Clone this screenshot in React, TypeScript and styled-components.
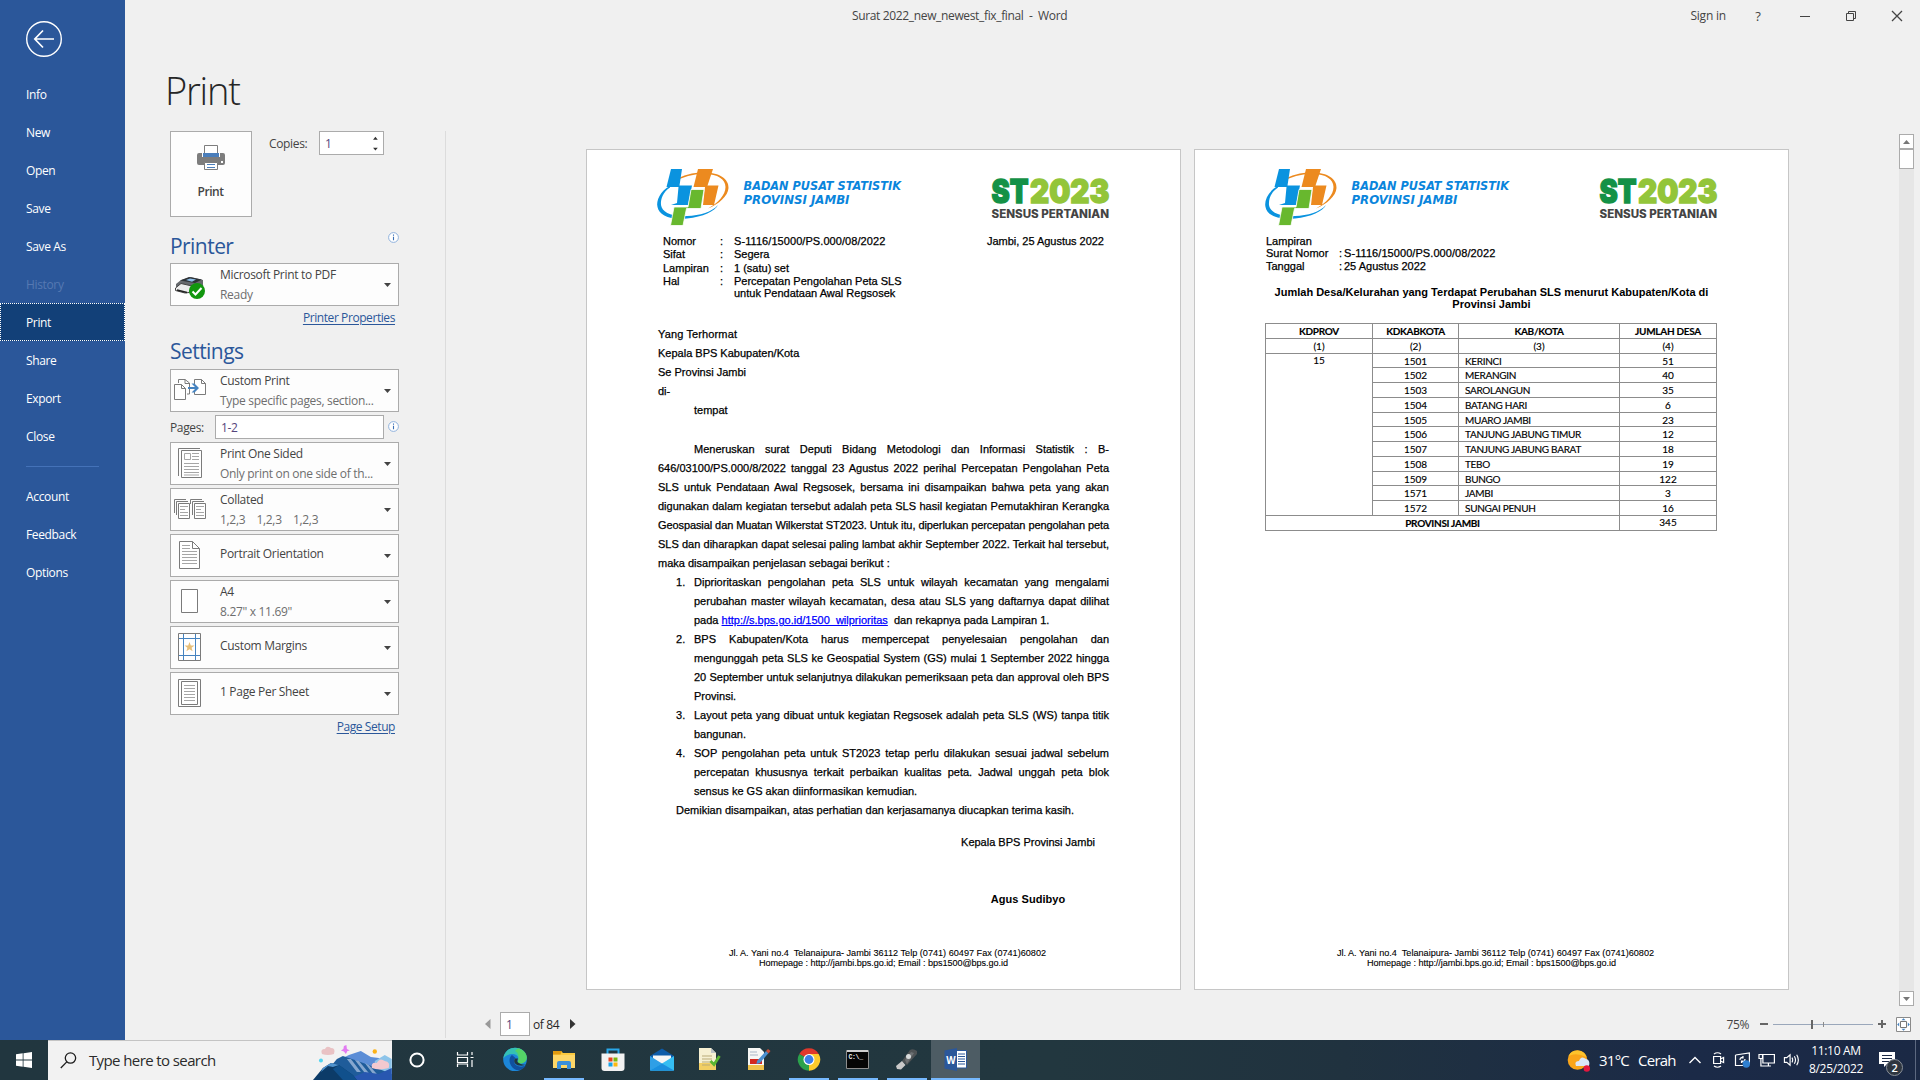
import React from "react";
import styled, { createGlobalStyle } from "styled-components";

const ui = `"Open Sans", "Noto Sans", sans-serif`;
const doc = `"Liberation Sans", Arial, sans-serif`;

const GlobalStyle = createGlobalStyle`
  * { box-sizing: border-box; }
  body { margin: 0; background: #f0f0f0; font-family: ${ui}; font-size: 12px; letter-spacing: -0.35px; color: #444; overflow: hidden; }
`;

const Screen = styled.div`
  width: 1920px;
  height: 1080px;
  display: flex;
  flex-direction: column;
`;

const Window = styled.div`
  height: 1040px;
  display: flex;
`;

/* ---------- backstage navigation ---------- */

const Sidebar = styled.nav`
  width: 125px;
  background: #2b579a;
  color: #fff;
  display: flex;
  flex-direction: column;
`;

const BackButton = styled.div`
  height: 75px;
  padding: 20px 0 0 25px;
`;

const NavItem = styled.div<{ $active?: boolean; $disabled?: boolean }>`
  height: 38px;
  line-height: 38px;
  padding-left: ${(p) => (p.$active ? 25 : 26)}px;
  color: ${(p) => (p.$disabled ? "#5679b2" : "#fff")};
  ${(p) => (p.$active ? "background: #124078; border: 1px dotted #fff;" : "padding-top: 1px;")}
`;

const NavRule = styled.div`
  height: 1px;
  width: 73px;
  margin: 11px 0 10px 26px;
  background: #4472b8;
`;

/* ---------- window chrome ---------- */

const Main = styled.main`
  flex: 1;
  display: flex;
  flex-direction: column;
`;

const TitleBar = styled.header`
  height: 32px;
  display: grid;
  grid-template-columns: 1fr 217px 1fr;
  align-items: start;
`;

const WindowTitle = styled.div`
  grid-column: 2;
  white-space: pre;
  margin-left: -62px;
  width: 230px;
  line-height: 31px;
`;

const Controls = styled.div`
  display: flex;
  justify-content: flex-end;
  align-items: center;
  height: 31px;
  padding-right: 17px;
`;

const SignIn = styled.span`
  letter-spacing: -0.2px;
  margin-right: 27px;
`;

const Help = styled.span`
  font-size: 13px;
  width: 10px;
  text-align: center;
  margin-right: 36px;
`;

const ControlIcon = styled.svg`
  width: 12px;
  height: 12px;
  & + & { margin-left: 34px; }
`;

const Heading = styled.h1`
  margin: 0;
  height: 99px;
  padding: 32px 0 0 40px;
  font-weight: 300;
  font-size: 38px;
  line-height: 52px;
  letter-spacing: -1.2px;
  color: #262626;
`;

const Body = styled.div`
  flex: 1;
  display: flex;
`;

/* ---------- print settings ---------- */

const Settings = styled.section`
  width: 321px;
  height: 907px;
  padding-left: 45px;
  border-right: 1px solid #dcdcdc;
  display: flex;
  flex-direction: column;
`;

const PrintRow = styled.div`
  display: flex;
  height: 86px;
`;

const PrintButton = styled.button`
  width: 82px;
  height: 86px;
  border: 1px solid #ababab;
  background: #fdfdfd;
  padding: 13px 1px 0 0;
  display: flex;
  flex-direction: column;
  align-items: center;
  gap: 12px;
  font: 600 12px ${ui};
  letter-spacing: -0.5px;
  color: #444;
`;

const CopiesLabel = styled.label`
  width: 67px;
  padding-left: 17px;
  line-height: 25px;
`;

const Field = styled.div<{ $w: number }>`
  width: ${(p) => p.$w}px;
  height: 24px;
  border: 1px solid #ababab;
  background: #fff;
  line-height: 23px;
  padding-left: 5px;
  display: flex;
  justify-content: space-between;
  color: #56457c;
`;

const GroupHead = styled.div<{ $top: number; $h: number }>`
  margin-top: ${(p) => p.$top}px;
  height: ${(p) => p.$h}px;
  width: 229px;
  display: flex;
  justify-content: space-between;
  & > svg { margin-top: 1px; }
`;

const GroupTitle = styled.h2`
  margin: 0;
  font-weight: 400;
  font-size: 21px;
  line-height: 30px;
  letter-spacing: -0.55px;
  color: #2b579a;
`;

const Drop = styled.div`
  width: 229px;
  height: 43px;
  flex: none;
  border: 1px solid #ababab;
  background: #fdfdfd;
  display: flex;
  align-items: center;
  padding-right: 7px;
  margin-bottom: 3px;
`;

const DropIcon = styled.div`
  width: 49px;
  padding-left: 2px;
  height: 36px;
`;

const DropText = styled.div<{ $single: boolean }>`
  flex: 1;
  line-height: 20px;
  white-space: pre;
  letter-spacing: -0.31px;
  padding-bottom: ${(p) => (p.$single ? 3 : 0)}px;
`;

const Sub = styled.div`
  color: #6e6e6e;
`;

const PagesRow = styled.div`
  display: flex;
  align-items: center;
  height: 24px;
  margin-bottom: 3px;
`;

const PagesLabel = styled.span`
  width: 45px;
`;

const InfoSlot = styled.span`
  margin-left: 4px;
  height: 12px;
  line-height: 0;
`;

const Link = styled.a`
  width: 225px;
  height: 18px;
  line-height: 18px;
  text-align: right;
  text-decoration: underline;
  text-underline-offset: 2px;
  letter-spacing: -0.42px;
  color: #2b579a;
`;

/* ---------- preview ---------- */

const Preview = styled.section`
  flex: 1;
  display: flex;
  flex-direction: column;
`;

const Canvas = styled.div`
  height: 875px;
  display: flex;
  padding-left: 140px;
`;

const Sheet = styled.article`
  width: 595px;
  height: 841px;
  margin: 18px 13px 0 0;
  border: 1px solid #c6c6c6;
  background: #fff;
  padding: 19px 71px 0 70px;
  font-family: ${doc};
  font-size: 11px;
  letter-spacing: 0;
  color: #000;
  -webkit-text-stroke: 0.25px #000;
`;

const Letterhead = styled.div`
  display: flex;
  height: 57px;
  margin-bottom: 8px;
  -webkit-text-stroke: 0;
`;

const Meta = styled.div`
  display: grid;
  grid-template-columns: 57px 14px 253px 1fr;
  grid-template-rows: 14px 12px 15px 12px 11px;
  padding-left: 6px;
  align-items: center;
  white-space: nowrap;
  height: 91px;
  align-content: start;
`;

const MetaCell = styled.span<{ $col: number; $wide?: boolean }>`
  grid-column: ${(p) => p.$col};
  letter-spacing: ${(p) => (p.$wide ? 0.07 : 0)}px;
`;

const DateCell = styled.span`
  grid-column: 4;
  grid-row: 1;
  letter-spacing: -0.02px;
`;

const Line = styled.p<{ $indent?: number; $justify?: boolean; $wide?: boolean }>`
  margin: 0;
  height: 19px;
  line-height: 19px;
  padding-left: ${(p) => 1 + (p.$indent ?? 0)}px;
  white-space: ${(p) => (p.$justify ? "normal" : "pre")};
  text-align-last: ${(p) => (p.$justify ? "justify" : "left")};
  letter-spacing: ${(p) => (p.$wide ? 0.13 : 0)}px;
`;

const BodyText = styled.div`
  padding-top: 1px;
`;

const Tight = styled.span`
  letter-spacing: -0.1px;
  word-spacing: -0.5px;
`;

const Item = styled.div`
  display: grid;
  grid-template-columns: 18px 1fr;
  padding-left: 18px;
`;

const ItemNo = styled.span`
  line-height: 19px;
  padding-left: 1px;
`;

const DocLink = styled.a`
  color: #0000ff;
  text-decoration: underline;
  -webkit-text-stroke: 0.25px #0000ff;
`;

const Signature = styled.div`
  width: 136px;
  margin: 16px 0 0 303px;
  height: 95px;
  text-align: center;
  white-space: nowrap;
`;

const SignName = styled.div`
  margin-top: 45px;
  font-weight: 700;
  letter-spacing: 0.03px;
  -webkit-text-stroke: 0;
`;

const Foot = styled.footer<{ $top: number }>`
  margin-top: ${(p) => p.$top}px;
  text-align: center;
  font-size: 9.15px;
  line-height: 10px;
  white-space: pre;
  -webkit-text-stroke: 0.1px #000;
`;

const Address = styled.div`
  padding-left: 9px;
`;

const Contact = styled.div`
  padding-left: 1px;
  letter-spacing: -0.07px;
`;

const Attach = styled.div`
  display: grid;
  grid-template-columns: 73px 5px 1fr;
  grid-template-rows: 13px 12px 13px;
  padding-left: 1px;
  align-items: center;
  height: 52px;
  align-content: start;
`;

const TableTitle = styled.div`
  text-align: center;
  font-weight: 700;
  font-size: 11px;
  line-height: 12px;
  height: 37px;
  padding-left: 1px;
  white-space: nowrap;
  -webkit-text-stroke: 0;
`;

const Table = styled.table`
  border-collapse: collapse;
  table-layout: fixed;
  width: 452px;
  font: 10px Lato, Carlito, sans-serif;
  -webkit-text-stroke: 0.15px #000;
`;

const Row = styled.tr<{ $h: number }>`
  height: ${(p) => p.$h}px;
`;

const Cell = styled.td<{ $left?: boolean; $bold?: boolean; $top?: boolean }>`
  border: 1px solid #8c8c8c;
  padding: ${(p) => (p.$left ? "0 0 0 6px" : "0")};
  line-height: 12px;
  text-align: ${(p) => (p.$left ? "left" : "center")};
  vertical-align: ${(p) => (p.$top ? "top" : "middle")};
  font-weight: ${(p) => (p.$bold ? 700 : 400)};
  letter-spacing: ${(p) => (p.$left ? -0.3 : p.$bold ? -0.3 : 0)}px;
`;

const Scroll = styled.div`
  width: 15px;
  height: 872px;
  margin: 3px 0 0 97px;
  background: #e6e6e6;
  display: flex;
  flex-direction: column;
`;

const ScrollPart = styled.div<{ $h: number }>`
  height: ${(p) => p.$h}px;
  border: 1px solid #ababab;
  background: #fff;
  display: flex;
  align-items: center;
  justify-content: center;
  &:last-child { margin-top: auto; }
`;

const Status = styled.div`
  height: 34px;
  display: flex;
  align-items: center;
  padding: 2px 9px 0 39px;
`;

const PageCount = styled.span`
  margin: 0 11px 0 3px;
  color: #262626;
`;

const Percent = styled.span`
  margin-left: auto;
  margin-right: 11px;
`;

const PageField = styled(Field)`
  margin-left: 9px;
`;

const FitSlot = styled.span`
  margin-left: 9px;
  height: 15px;
  line-height: 0;
`;

/* ---------- taskbar ---------- */

const Taskbar = styled.footer`
  height: 40px;
  display: flex;
  background: linear-gradient(90deg, #21363f 0%, #22373f 55%, #20323f 70%, #1b2a47 88%, #1b2945 100%);
  color: #fff;
`;

const Start = styled.div`
  width: 48px;
  padding: 12px 0 0 16px;
`;

const Search = styled.div`
  width: 344px;
  background: #f2f2f2;
  border-top: 1px solid #c4c4c4;
  display: flex;
  align-items: center;
  color: #2b2b2b;
  font-size: 15px;
  letter-spacing: -0.6px;
  padding-left: 12px;
`;

const SearchText = styled.span`
  padding: 0 0 2px 12px;
  width: 237px;
`;

const TaskButton = styled.div<{ $open?: boolean; $active?: boolean }>`
  width: 49px;
  display: flex;
  align-items: center;
  justify-content: center;
  border-bottom: 2px solid transparent;
  background: ${(p) =>
    p.$active
      ? "linear-gradient(#76b9ff, #76b9ff) bottom / 100% 2px no-repeat border-box, #4d5c64"
      : p.$open
        ? "linear-gradient(#76b9ff, #76b9ff) bottom / 40px 2px no-repeat border-box"
        : "none"};
`;

const Tray = styled.div`
  margin-left: auto;
  display: flex;
  align-items: center;
`;

const Weather = styled.div`
  display: flex;
  align-items: center;
  font-size: 15px;
  width: 121px;
  letter-spacing: -0.75px;
  white-space: pre;
`;

const Temp = styled.span`
  margin: 0 9px 0 9px;
`;

const TrayIcons = styled.div`
  display: flex;
  align-items: center;
  gap: 8px;
`;

const Clock = styled.div`
  width: 72px;
  text-align: center;
  line-height: 18px;
  letter-spacing: -0.3px;
`;

const Notice = styled.div`
  padding-left: 7px;
  width: 44px;
  height: 40px;
  border-right: 1px solid #5c6880;
  margin-right: 4px;
`;

/* ---------- drawings ---------- */

const Caret = ({ up, w = 7, c = "#444" }: { up?: boolean; w?: number; c?: string }) => (
  <svg width={w} height={4} viewBox="0 0 7 4">
    <path d={up ? "M0 4L3.5 0L7 4Z" : "M0 0H7L3.5 4Z"} fill={c} />
  </svg>
);

const Info = () => (
  <svg width="11" height="11" viewBox="0 0 11 11">
    <circle cx="5.500" cy="5.500" r="4.900" fill="#fff" stroke="#8fb1dc" />
    <path d="M5.500 2.600v1.200M5.500 4.800v3.400" stroke="#3a6fb5" strokeWidth="1.100" />
  </svg>
);

const Spinner = () => (
  <svg width="18" height="22" viewBox="0 0 19 22">
    <path d="M8.500 7.500h5L11 4.500ZM8.500 16h5L11 19Z" fill="#333" />
  </svg>
);

const PrinterGlyph = () => (
  <svg width="28" height="26" viewBox="0 0 28 26">
    <path d="M2 8h3v4h18V8h3q2 0 2 2v8q0 2-2 2H2q-2 0-2-2v-8q0-2 2-2z" fill="#7d7d7d" />
    <path d="M7.500 .5h13v9h-13z" fill="#fff" stroke="#7d7d7d" />
    <path d="M6 8h16v4H6z" fill="#4a7ebb" />
    <path d="M8 1h12v7H8z" fill="#fff" />
    <path d="M7.500 17.500h13v7h-13z" fill="#fff" stroke="#7d7d7d" />
    <path d="M10 19.500h8M10 22.500h8" stroke="#4a7ebb" />
    <path d="M24 16h2v2h-2z" fill="#fff" />
  </svg>
);

const g = "#7b7b7b";
const lg = "#a6a6a6";

const icons: Record<string, React.ReactNode> = {
  printer: (
    <>
      <path d="M3 17L8 13L18 10L30 13V20L20 27L3 22Z" fill="#66696d" />
      <path d="M7 13.500L16 10L29 12.500L22 16Z" fill="#2e3236" />
      <path d="M13 13L17 11.500L23 12.500L19 14.800Z" fill="#8fc0ea" />
      <path d="M2.500 21L8 16.500L19 19L16 25.500L12 26L2.500 23.500Z" fill="#ececec" stroke="#444" />
      <path d="M4 23L14 25.500" stroke="#222" strokeWidth="1.500" />
      <circle cx="24" cy="24" r="8" fill="#12970f" />
      <path d="M19.500 24.500L22.500 27.500L28.500 21" stroke="#fff" strokeWidth="2" fill="none" />
    </>
  ),
  custom: (
    <>
      <path d="M5.500 10V6.500H12L16.500 10V21H14" fill="#fff" stroke={g} />
      <path d="M1.500 11.500H8.500L12.500 15.500V26.500H1.500Z" fill="#fff" stroke={g} />
      <path d="M8.500 11.500V15.500H12.500M12 6.500V10.500H16.500" fill="none" stroke={g} />
      <path d="M21.500 11V6.500H28.500L32.500 10.500V21.500H21.500V18" fill="#fff" stroke={g} />
      <path d="M28.500 6.500V10.500H32.500" fill="none" stroke={g} />
      <path d="M15 14H22L18.500 10.500H21.500L26 15L21.500 19.500H18.500L22 16H15Z" fill="#4583c0" />
    </>
  ),
  sided: (
    <>
      <path d="M5.500 30V2.500H27" fill="none" stroke={g} />
      <path d="M8.500 4.500h20v27h-20z" fill="#fff" stroke={g} />
      <path d="M11.500 7.500h6v6h-6zM19 7.500h7M19 10.500h7M19 13.500h7M11 17.500h15M11 20.500h15M11 23.500h15M11 26.500h15M11 29h15" fill="none" stroke={lg} />
    </>
  ),
  collated: (
    <>
      <path d="M1.500 21V7.500H13M3.500 23V9.500H15M17.500 12V7.500H29M19.500 23V9.500H31" fill="none" stroke={g} />
      <path d="M5.500 11.500h11v15h-11zM21.500 11.500h11v15h-11z" fill="#fff" stroke={g} />
      <path d="M7 14.500h8M7 17.500h5M7 20.500h8M7 23.500h8M23 14.500h8M23 17.500h5M23 20.500h8M23 23.500h8" stroke={lg} />
    </>
  ),
  portrait: (
    <>
      <path d="M6.500 3.500H19.500L26.500 10.500V30.500H6.500Z" fill="#fff" stroke={g} />
      <path d="M19.500 3.500V10.500H26.500" fill="none" stroke={g} />
      <path d="M9 7.500h8M9 10.500h8M9 13.500h15M9 16.500h15M9 19.500h15M9 22.500h15M9 25.500h15" stroke={lg} />
    </>
  ),
  paper: <path d="M8.500 5.500h16v23h-16z" fill="#fff" stroke={g} />,
  margins: (
    <>
      <path d="M5.500 3.500h22v27h-22z" fill="#fff" stroke={g} />
      <path d="M10.500 4v26M22.500 4v26M6 8.500h21M6 25.500h21" stroke="#4583c0" />
      <path d="M16.500 12l1.300 3.400 3.700.1-2.900 2.200 1 3.600-3.100-2.100-3.100 2.100 1-3.600-2.900-2.200 3.700-.1z" fill="#e8c07a" />
    </>
  ),
  sheet: (
    <>
      <path d="M5.500 3.500h22v27h-22z" fill="#fff" stroke={g} />
      <path d="M8.500 5.500h16v23h-16z" fill="#fff" stroke={g} />
      <path d="M11 9.500h11M11 12.500h11M11 15.500h11M11 18.500h11M11 21.500h11M11 24.500h11" stroke={lg} />
    </>
  ),
};

const Option = ({ icon, title, sub }: { icon: string; title: string; sub?: string }) => (
  <Drop>
    <DropIcon>
      <svg width="34" height="36" viewBox="0 0 34 36">{icons[icon]}</svg>
    </DropIcon>
    <DropText $single={!sub}>
      {title}
      {sub && <Sub>{sub}</Sub>}
    </DropText>
    <Caret />
  </Drop>
);

const LetterheadArt = () => (
  <Letterhead>
    <svg width="456" height="57" viewBox="0 0 456 57" overflow="visible">
      <path d="M46 3.500C62 3 72 10 71.500 19C71 27 62 35 51 39.500C61 34 68.500 26 68.500 18C68.500 10 60 4.500 46 5Z" fill="#ec8a1f" />
      <path d="M17 11.500C26 6 36 3.500 46 3.500V5C36 5 26 8 17 12.500Z" fill="#ec8a1f" />
      <path d="M13 17C3 22 -1 32 .5 38C2 46 12 51 30 49.500C46 48 58 42 61 36C55 43 43 46.500 30 47C14 48 5 43 4 36C3.500 30 6 23 13 18.500Z" fill="#0a93df" />
      <path d="M14 0H25L22.500 16.500H35L31 36H14L20 34L21.500 18H9.500Z" fill="#0a93df" />
      <path d="M41 0H56L50.500 16.500H61.500L57 36H46L48 18H36.500Z" fill="#ec8a1f" />
      <path d="M34 20.500H47L44 39.500H29.500L26 56.500H13.500L17 38H31Z" fill="#68b82e" stroke="#fff" strokeWidth=".8" />
      <g fontFamily='"DejaVu Sans", Verdana, sans-serif' fontWeight="700" fontStyle="italic" fontSize="11.8" fill="#0a85dc">
        <text x="86.500" y="21.300" textLength="157.500" lengthAdjust="spacingAndGlyphs">BADAN PUSAT STATISTIK</text>
        <text x="86.500" y="35.300" textLength="106" lengthAdjust="spacingAndGlyphs">PROVINSI JAMBI</text>
      </g>
      <g fontFamily="Inter, sans-serif" fontWeight="900">
        <text x="334.500" y="34" fontSize="32.500" textLength="37" lengthAdjust="spacingAndGlyphs" fill="#149146" stroke="#149146" strokeWidth="1.400">ST</text>
        <text x="373" y="34" fontSize="32.500" textLength="79.500" lengthAdjust="spacingAndGlyphs" fill="#93c53a" stroke="#93c53a" strokeWidth="1.400">2023</text>
        <text x="334.500" y="49.200" fontSize="11.300" fontWeight="800" textLength="117.500" lengthAdjust="spacingAndGlyphs" fill="#444">SENSUS PERTANIAN</text>
      </g>
    </svg>
  </Letterhead>
);

const Footer = ({ top }: { top: number }) => (
  <Foot $top={top}>
    <Address>{"Jl. A. Yani no.4  Telanaipura- Jambi 36112 Telp (0741) 60497 Fax (0741)60802"}</Address>
    <Contact>Homepage : http://jambi.bps.go.id; Email : bps1500@bps.go.id</Contact>
  </Foot>
);

/* ---------- content ---------- */

const meta = [
  ["Nomor", ":", "S-1116/15000/PS.000/08/2022"],
  ["Sifat", ":", "Segera"],
  ["Lampiran", ":", "1 (satu) set"],
  ["Hal", ":", "Percepatan Pengolahan Peta SLS"],
  ["", "", "untuk Pendataan Awal Regsosek"],
];

const opening: React.ReactNode[] = [
  "646/03100/PS.000/8/2022 tanggal 23 Agustus 2022 perihal Percepatan Pengolahan Peta",
  "SLS untuk Pendataan Awal Regsosek, bersama ini disampaikan bahwa peta yang akan",
  "digunakan dalam kegiatan tersebut adalah peta SLS hasil kegiatan Pemutakhiran Kerangka",
  <Tight>Geospasial dan Muatan Wilkerstat ST2023. Untuk itu, diperlukan percepatan pengolahan peta</Tight>,
  "SLS dan diharapkan dapat selesai paling lambat akhir September 2022. Terkait hal tersebut,",
];

const points: React.ReactNode[][] = [
  [
    "Diprioritaskan pengolahan peta SLS untuk wilayah kecamatan yang mengalami",
    "perubahan master wilayah kecamatan, desa atau SLS yang daftarnya dapat dilihat",
    <>pada <DocLink>http://s.bps.go.id/1500_wilprioritas</DocLink>{"  dan rekapnya pada Lampiran 1."}</>,
  ],
  [
    "BPS Kabupaten/Kota harus mempercepat penyelesaian pengolahan dan",
    "mengunggah peta SLS ke Geospatial System (GS) mulai 1 September 2022 hingga",
    "20 September untuk selanjutnya dilakukan pemeriksaan peta dan approval oleh BPS",
    "Provinsi.",
  ],
  ["Layout peta yang dibuat untuk kegiatan Regsosek adalah peta SLS (WS) tanpa titik", "bangunan."],
  [
    "SOP pengolahan peta untuk ST2023 tetap perlu dilakukan sesuai jadwal sebelum",
    "percepatan khususnya terkait perbaikan kualitas peta. Jadwal unggah peta blok",
    "sensus ke GS akan diinformasikan kemudian.",
  ],
];

const regions: [string, string, number, number][] = [
  ["1501", "KERINCI", 51, 14],
  ["1502", "MERANGIN", 40, 15],
  ["1503", "SAROLANGUN", 35, 15],
  ["1504", "BATANG HARI", 6, 15],
  ["1505", "MUARO JAMBI", 23, 14],
  ["1506", "TANJUNG JABUNG TIMUR", 12, 15],
  ["1507", "TANJUNG JABUNG BARAT", 18, 15],
  ["1508", "TEBO", 19, 15],
  ["1509", "BUNGO", 122, 14],
  ["1571", "JAMBI", 3, 15],
  ["1572", "SUNGAI PENUH", 16, 15],
];

const nav = ["Info", "New", "Open", "Save", "Save As", "History", "Print", "Share", "Export", "Close"];

const apps: { name: string; open?: boolean; active?: boolean; art: React.ReactNode }[] = [
  { name: "cortana", art: <circle cx="12" cy="13" r="6.600" fill="none" stroke="#fff" strokeWidth="2" /> },
  {
    name: "taskview",
    art: <path d="M3.500 5v3h10V5M3.500 20v-3h10v3M3.500 10.500h10v5h-10zM18 5v3M18 13v7M16.500 10.500h3" fill="none" stroke="#fff" strokeWidth="1.200" />,
  },
  {
    name: "edge",
    art: (
      <>
        <circle cx="12" cy="12.500" r="11.800" fill="#1c86d8" />
        <path d="M.3 12C1 5 6 .7 12 .7C19 .7 23.800 5.500 23.800 10.500C23.800 14 21 16.500 17.500 16.500C15.500 16.500 14.500 15.800 14.500 15C14.500 14 15.500 13.500 15.500 11.800C15.500 9 12.500 7 9 7C5 7 1.500 9 .3 12Z" fill="#35c1b4" />
        <path d="M15 1.200C20.500 2.500 23.800 6.500 23.800 10.500C23.800 14 21 16.500 17.500 16.500C15.500 16.500 14.500 15.800 14.500 15C16 13 16.500 6 12 4Z" fill="#5fd84e" opacity=".75" />
        <path d="M9 8C6.500 10 5.500 14 8 18.500C10 22 14 24 17 23C20 22 22 20 22.800 18.500C20 20 16 20 13.500 18.500C11 17 10 13 12.500 11Z" fill="#10509f" />
        <path d="M12 11.500C10 14.500 12 18 16 18.500C20 19 22 18 23 17.500C21 18 16 17 14.500 15Q14 13 15 11.500Z" fill="#21363f" />
      </>
    ),
  },
  {
    name: "explorer",
    open: true,
    art: (
      <>
        <path d="M1 4H9L11 6H23V21H1Z" fill="#fbc93f" />
        <path d="M1 4H10L8.500 7.500H1Z" fill="#e09a10" />
        <path d="M1 8H23V21H1Z" fill="#fdd667" />
        <path d="M5 22V16Q5 14 7 14H17Q19 14 19 16V22H15V18H9V22Z" fill="#3a8fdb" />
      </>
    ),
  },
  {
    name: "store",
    art: (
      <>
        <path d="M6.500 7V2.500H17.500V7" fill="none" stroke="#29a8ea" strokeWidth="2" />
        <path d="M.5 6.500H23.500V21Q23.500 24 20.500 24H3.500Q.5 24 .5 21Z" fill="#f2f2f2" />
        <path d="M7.500 10.500h4v4h-4z" fill="#e8431f" />
        <path d="M12.500 10.500h4v4h-4z" fill="#7cb80f" />
        <path d="M7.500 15.500h4v4h-4z" fill="#17a3ea" />
        <path d="M12.500 15.500h4v4h-4z" fill="#fdb90f" />
      </>
    ),
  },
  {
    name: "mail",
    art: (
      <>
        <path d="M0 9L12 1.500L24 9V23H0Z" fill="#0d5ba8" />
        <path d="M3 8.500H21V18H3Z" fill="#f5f5f5" />
        <path d="M0 9L12 16.500L24 23.500H0Z" fill="#2f9fe6" />
        <path d="M24 9L12 16.500L0 23.500H24Z" fill="#35bdf2" />
        <path d="M0 23.500L12 16.500L24 23.500Z" fill="#1b8fdf" />
      </>
    ),
  },
  {
    name: "notes",
    art: (
      <>
        <path d="M0 1H12L17 6V23H0Z" fill="#f6f0d2" />
        <path d="M0 16H17V23H0Z" fill="#f2cf63" />
        <path d="M12 1V6H17Z" fill="#bfc3c6" />
        <path d="M3 9h10M3 12h10M3 15h8M3 18h8" stroke="#b9ab78" />
        <path d="M11.500 14L15 17.500L20.500 9" fill="none" stroke="#5bb531" strokeWidth="2.800" />
      </>
    ),
  },
  {
    name: "editor",
    art: (
      <>
        <path d="M0 1H12L16 5V23H0Z" fill="#f7f7f5" />
        <path d="M0 18H16V23H0Z" fill="#f0c34c" />
        <path d="M2 12h12v5H2z" fill="#d3281f" />
        <path d="M2 8h8M2 5h7" stroke="#a9b7c7" />
        <path d="M9 14L18 4L20.500 6L12 16L8.500 17Z" fill="#4a8fd0" />
        <path d="M18 4L20 2L22.500 4L20.500 6.500Z" fill="#c9503c" />
      </>
    ),
  },
  {
    name: "chrome",
    open: true,
    art: (
      <>
        <path d="M12 12.500L2.300 6.900A11.200 11.200 0 0 1 21.700 6.900Z" fill="#e0382c" />
        <path d="M12 12.500L21.700 6.900A11.200 11.200 0 0 1 12 23.700Z" fill="#fccb2c" />
        <path d="M12 12.500L12 23.700A11.200 11.200 0 0 1 2.300 6.900Z" fill="#2ba24c" />
        <path d="M12 7H21.700L17 15L12 23.700L13 16Z" fill="#fccb2c" />
        <circle cx="12" cy="12.500" r="5.500" fill="#fff" />
        <circle cx="12" cy="12.500" r="4.400" fill="#3c7fe8" />
      </>
    ),
  },
  {
    name: "terminal",
    open: true,
    art: (
      <>
        <path d="M.5 3.500h22v18H.5z" fill="#050505" stroke="#8e8e8e" />
        <path d="M1 3h21v2H1z" fill="#cfcfcf" />
        <text x="2.500" y="11.500" fontFamily='"Liberation Mono", monospace' fontWeight="700" fontSize="6.500" fill="#eee">C:\_</text>
      </>
    ),
  },
  {
    name: "usb",
    open: true,
    art: (
      <>
        <path d="M7 14L15 3Q18 1 22 4L22 7L12 18Z" fill="#4f5355" />
        <path d="M10 13L16 5L19 6L12 17Z" fill="#6d7173" />
        <path d="M1 19L7 14L10.500 18L6 22.500L2 22Z" fill="#c9c9c9" />
        <circle cx="13.500" cy="9.500" r="2.500" fill="#d8dcdd" />
      </>
    ),
  },
  {
    name: "word",
    open: true,
    active: true,
    art: (
      <>
        <path d="M12 3.500H22.500V21H12Z" fill="#fff" stroke="#2b579a" />
        <path d="M14 7h7M14 9.500h7M14 12h7M14 14.500h7M14 17h7" stroke="#2b579a" />
        <path d="M.5 3.500L13 1V24L.5 21.500Z" fill="#2b579a" />
        <text x="2.300" y="16.500" fontFamily="Open Sans, sans-serif" fontWeight="700" fontSize="10.500" textLength="9" lengthAdjust="spacingAndGlyphs" fill="#fff">W</text>
      </>
    ),
  },
];

const Mountains = () => (
  <svg width="79" height="39" viewBox="0 0 79 39">
    <path d="M24 20L36 14L48 10L58 16L66 17L79 28V39H24Z" fill="#5b8dd6" />
    <path d="M62 20L72 14L79 18V39H62Z" fill="#8cc4ea" />
    <path d="M14 30L24 18L30 15L42 19L56 24L79 33V39H10Z" fill="#1f5c9a" />
    <path d="M34 18L44 31L48 31L38 18ZM42 19L52 32L56 32L46 20ZM52 22L61 34L65 34L56 24Z" fill="#86a7cf" />
    <path d="M34 39L52 31L66 33L79 27V39Z" fill="#2857b0" />
    <path d="M0 39L10 27L18 22L26 24L40 34L44 39Z" fill="#0c3b68" />
    <path d="M26 24L40 34L44 39H30L20 28Z" fill="#10508c" />
    <path d="M10 27L18 22L26 24L20 26L15 25L8 31Z" fill="#4f93cf" />
    <path d="M9 13Q7 8 12 8Q14 4 18 7Q23 7 21 13Q15 15 9 13Z" fill="#e9c2c4" />
    <path d="M59 27Q58 21 64 22Q67 16 72 20Q78 21 76 27Q66 30 59 27Z" fill="#f3c9cf" />
    <path d="M31 5L33.500 4L34 8L37 9.500L34.500 10L33 13L31 10.500L28 9.500L30.500 8Z" fill="#e27bf2" />
    <circle cx="62" cy="10.500" r="2.200" fill="#fbb217" />
    <circle cx="8" cy="19.500" r="2" fill="#52d4ef" />
  </svg>
);

const ZoomSlider = () => (
  <svg width="127" height="14" viewBox="0 0 127 14">
    <path d="M0 7h8M118 7h8M122 3v8" stroke="#666" strokeWidth="2" />
    <path d="M13 7.500h100" stroke="#9aa7ba" />
    <path d="M52 3v9" stroke="#666" strokeWidth="2" />
    <path d="M63.500 5v5" stroke="#8a8a8a" />
  </svg>
);

const FitPage = () => (
  <svg width="15" height="15" viewBox="0 0 15 15">
    <path d="M.5 .5h14v14H.5z" fill="#fff" stroke="#8a8a8a" />
    <path d="M4.500 4.500h6v6h-6z" fill="#fff" stroke="#777" />
    <path d="M5.500 3.200L7.500 1.200L9.500 3.200ZM5.500 11.800L7.500 13.800L9.500 11.800ZM3.200 5.500L1.200 7.500L3.200 9.500ZM11.800 5.500L13.800 7.500L11.800 9.500Z" fill="#4583c0" />
  </svg>
);

const LetterSheet = () => (
  <Sheet>
    <LetterheadArt />
    <Meta>
      {meta.map(([a, b, c], i) => (
        <React.Fragment key={c}>
          <MetaCell $col={1}>{a}</MetaCell>
          <MetaCell $col={2}>{b}</MetaCell>
          <MetaCell $col={3} $wide={i === 0}>{c}</MetaCell>
        </React.Fragment>
      ))}
      <DateCell>Jambi, 25 Agustus 2022</DateCell>
    </Meta>
    <Line $wide>Yang Terhormat</Line>
    <Line>Kepala BPS Kabupaten/Kota</Line>
    <Line>Se Provinsi Jambi</Line>
    <Line>di-</Line>
    <Line $indent={36}>tempat</Line>
    <Line> </Line>
    <BodyText>
      <Line $indent={36} $justify>Meneruskan surat Deputi Bidang Metodologi dan Informasi Statistik : B-</Line>
      {opening.map((t, i) => (
        <Line key={i} $justify>{t}</Line>
      ))}
      <Line>maka disampaikan penjelasan sebagai berikut :</Line>
      {points.map((lines, i) => (
        <Item key={i}>
          <ItemNo>{i + 1}.</ItemNo>
          <div>
            {lines.map((t, j) => (
              <Line key={j} $justify={j < lines.length - 1}>{t}</Line>
            ))}
          </div>
        </Item>
      ))}
      <Line $indent={18}>Demikian disampaikan, atas perhatian dan kerjasamanya diucapkan terima kasih.</Line>
    </BodyText>
    <Signature>
      Kepala BPS Provinsi Jambi
      <SignName>Agus Sudibyo</SignName>
    </Signature>
    <Footer top={17} />
  </Sheet>
);

const TableSheet = () => (
  <Sheet>
    <LetterheadArt />
    <Attach>
      <span>Lampiran</span><span /><span />
      <span>Surat Nomor</span><span>:</span><MetaCell $col={3} $wide>S-1116/15000/PS.000/08/2022</MetaCell>
      <span>Tanggal</span><span>:</span><span>25 Agustus 2022</span>
    </Attach>
    <TableTitle>
      Jumlah Desa/Kelurahan yang Terdapat Perubahan SLS menurut Kabupaten/Kota di<br />Provinsi Jambi
    </TableTitle>
    <Table>
      <colgroup>
        <col width="107" /><col width="86" /><col width="161" /><col width="97" />
      </colgroup>
      <tbody>
        <Row $h={15}>
          {["KDPROV", "KDKABKOTA", "KAB/KOTA", "JUMLAH DESA"].map((t) => <Cell key={t} $bold>{t}</Cell>)}
        </Row>
        <Row $h={15}>
          {["(1)", "(2)", "(3)", "(4)"].map((t) => <Cell key={t}>{t}</Cell>)}
        </Row>
        {regions.map(([code, name, count, h], i) => (
          <Row key={code} $h={h}>
            {i === 0 && <Cell rowSpan={11} $top>15</Cell>}
            <Cell>{code}</Cell>
            <Cell $left>{name}</Cell>
            <Cell>{count}</Cell>
          </Row>
        ))}
        <Row $h={15}>
          <Cell colSpan={3} $bold>PROVINSI JAMBI</Cell>
          <Cell $top>345</Cell>
        </Row>
      </tbody>
    </Table>
    <Footer top={417} />
  </Sheet>
);

export default function App() {
  return (
    <Screen>
      <GlobalStyle />
      <Window>
        <Sidebar>
          <BackButton>
            <svg width="38" height="38" viewBox="0 0 38 38" fill="none" stroke="#fff">
              <circle cx="19" cy="19" r="17.300" strokeWidth="1.400" />
              <path d="M29 19H10M18 10.500L9.800 19L18 27.500" strokeWidth="1.700" />
            </svg>
          </BackButton>
          {nav.map((n) => (
            <NavItem key={n} $active={n === "Print"} $disabled={n === "History"}>{n}</NavItem>
          ))}
          <NavRule />
          {["Account", "Feedback", "Options"].map((n) => <NavItem key={n}>{n}</NavItem>)}
        </Sidebar>
        <Main>
          <TitleBar>
            <WindowTitle>{"Surat 2022_new_newest_fix_final  -  Word"}</WindowTitle>
            <Controls>
              <SignIn>Sign in</SignIn>
              <Help>?</Help>
              <ControlIcon viewBox="0 0 12 12"><path d="M1 6.500h10" stroke="#444" /></ControlIcon>
              <ControlIcon viewBox="0 0 12 12"><path d="M1.500 3.500h7v7h-7zM3.500 3V1.500h7v7H9" fill="none" stroke="#444" /></ControlIcon>
              <ControlIcon viewBox="0 0 12 12"><path d="M1 1L11 11M11 1L1 11" stroke="#444" strokeWidth="1.300" /></ControlIcon>
            </Controls>
          </TitleBar>
          <Heading>Print</Heading>
          <Body>
            <Settings>
              <PrintRow>
                <PrintButton><PrinterGlyph />Print</PrintButton>
                <CopiesLabel>Copies:</CopiesLabel>
                <Field $w={65}>1<Spinner /></Field>
              </PrintRow>
              <GroupHead $top={14} $h={32}>
                <GroupTitle>Printer</GroupTitle>
                <Info />
              </GroupHead>
              <Option icon="printer" title="Microsoft Print to PDF" sub="Ready" />
              <Link>Printer Properties</Link>
              <GroupHead $top={9} $h={33}>
                <GroupTitle>Settings</GroupTitle>
              </GroupHead>
              <Option icon="custom" title="Custom Print" sub="Type specific pages, section..." />
              <PagesRow>
                <PagesLabel>Pages:</PagesLabel>
                <Field $w={169}>1-2</Field>
                <InfoSlot><Info /></InfoSlot>
              </PagesRow>
              <Option icon="sided" title="Print One Sided" sub="Only print on one side of th..." />
              <Option icon="collated" title="Collated" sub="1,2,3    1,2,3    1,2,3" />
              <Option icon="portrait" title="Portrait Orientation" />
              <Option icon="paper" title="A4" sub={'8.27" x 11.69"'} />
              <Option icon="margins" title="Custom Margins" />
              <Option icon="sheet" title="1 Page Per Sheet" />
              <Link>Page Setup</Link>
            </Settings>
            <Preview>
              <Canvas>
                <LetterSheet />
                <TableSheet />
                <Scroll>
                  <ScrollPart $h={15}><Caret up c="#777" /></ScrollPart>
                  <ScrollPart $h={20} />
                  <ScrollPart $h={15}><Caret c="#777" /></ScrollPart>
                </Scroll>
              </Canvas>
              <Status>
                <svg width="6" height="10" viewBox="0 0 6 10"><path d="M5.500 0V10L0 5Z" fill="#999" /></svg>
                <PageField $w={30}>1</PageField>
                <PageCount>of 84</PageCount>
                <svg width="6" height="10" viewBox="0 0 6 10"><path d="M0 0V10L5.500 5Z" fill="#333" /></svg>
                <Percent>75%</Percent>
                <ZoomSlider />
                <FitSlot><FitPage /></FitSlot>
              </Status>
            </Preview>
          </Body>
        </Main>
      </Window>
      <Taskbar>
        <Start>
          <svg width="16" height="16" viewBox="0 0 16 16">
            <path d="M0 2.300L6.700 1.300V7.600H0ZM7.500 1.200L16 0V7.600H7.500ZM0 8.400H6.700V14.700L0 13.700ZM7.500 8.400H16V16L7.500 14.800Z" fill="#fff" />
          </svg>
        </Start>
        <Search>
          <svg width="17" height="17" viewBox="0 0 17 17" fill="none" stroke="#1d1d1d" strokeWidth="1.300">
            <circle cx="10.500" cy="6" r="5.200" />
            <path d="M6.800 9.900L.8 16" />
          </svg>
          <SearchText>Type here to search</SearchText>
          <Mountains />
        </Search>
        {apps.map((a) => (
          <TaskButton key={a.name} $open={a.open} $active={a.active}>
            <svg width="24" height="24" viewBox="0 0 24 24">{a.art}</svg>
          </TaskButton>
        ))}
        <Tray>
          <Weather>
            <svg width="24" height="24" viewBox="0 0 24 24">
              <circle cx="11.500" cy="12" r="9.800" fill="#f9a51a" />
              <path d="M2.500 8A9.800 9.800 0 0 1 20.500 9Q10 4 2.500 8Z" fill="#fdc32c" />
              <path d="M10 18Q8 13 13 13Q15 7 20 11Q24.500 12 23 18Z" fill="#dbe7f8" />
              <circle cx="20.800" cy="20.500" r="3.200" fill="#e3173e" />
            </svg>
            <Temp>31°C</Temp>
            Cerah
          </Weather>
          <TrayIcons>
            <svg width="14" height="18" viewBox="0 0 14 18" fill="none" stroke="#fff" strokeWidth="1.400"><path d="M2.500 12L8 6.500L13.500 12" /></svg>
            <svg width="16" height="18" viewBox="0 0 16 18" fill="none" stroke="#fff" strokeWidth="1.200">
              <path d="M4.600 5.500h7v7h-7zM11.600 8l3-1.500v5L11.600 10M5 3Q8.500 .5 12 3M5 15Q8.500 17.500 12 15" />
            </svg>
            <svg width="17" height="18" viewBox="0 0 17 18" fill="none" stroke="#fff" strokeWidth="1.200">
              <path d="M2.500 4L16.400 2V13M2.500 4V14.500H10M7 9Q7 6 10 6.500M10 5v2H8M12 8Q12 11 9 11M8.500 12v-2h2" />
              <circle cx="13.300" cy="13" r="3.700" fill="#2f7fd0" stroke="none" />
            </svg>
            <svg width="17" height="18" viewBox="0 0 17 18" fill="none" stroke="#fff" strokeWidth="1.200">
              <path d="M4.900 3.500h11.500v8.500H4.900zM1 3.500h3.500v4H1zM2.900 7.500v7.500h10M10.400 12v3" />
            </svg>
            <svg width="17" height="18" viewBox="0 0 18 18" fill="none" stroke="#fff" strokeWidth="1.200">
              <path d="M1.500 6.500H4L7.500 3.500V14.500L4 11.500H1.500ZM9.500 6.500Q11 9 9.500 11.500M12 5Q14.500 9 12 13M14.500 3.500Q18 9 14.500 14.500" />
            </svg>
          </TrayIcons>
          <Clock>11:10 AM<br />8/25/2022</Clock>
          <Notice>
            <svg width="28" height="40" viewBox="0 0 28 40">
              <path d="M0 12H16V24H8L5 27V24H0Z" fill="#fff" />
              <path d="M3 15.500h10M3 18.500h10M3 21.500h7" stroke="#1b2945" />
              <circle cx="15.500" cy="27.500" r="8" fill="#2e3640" stroke="#8a9099" />
              <text x="15.500" y="31.500" textAnchor="middle" fontFamily="Open Sans, sans-serif" fontWeight="600" fontSize="11" fill="#fff">2</text>
            </svg>
          </Notice>
        </Tray>
      </Taskbar>
    </Screen>
  );
}
